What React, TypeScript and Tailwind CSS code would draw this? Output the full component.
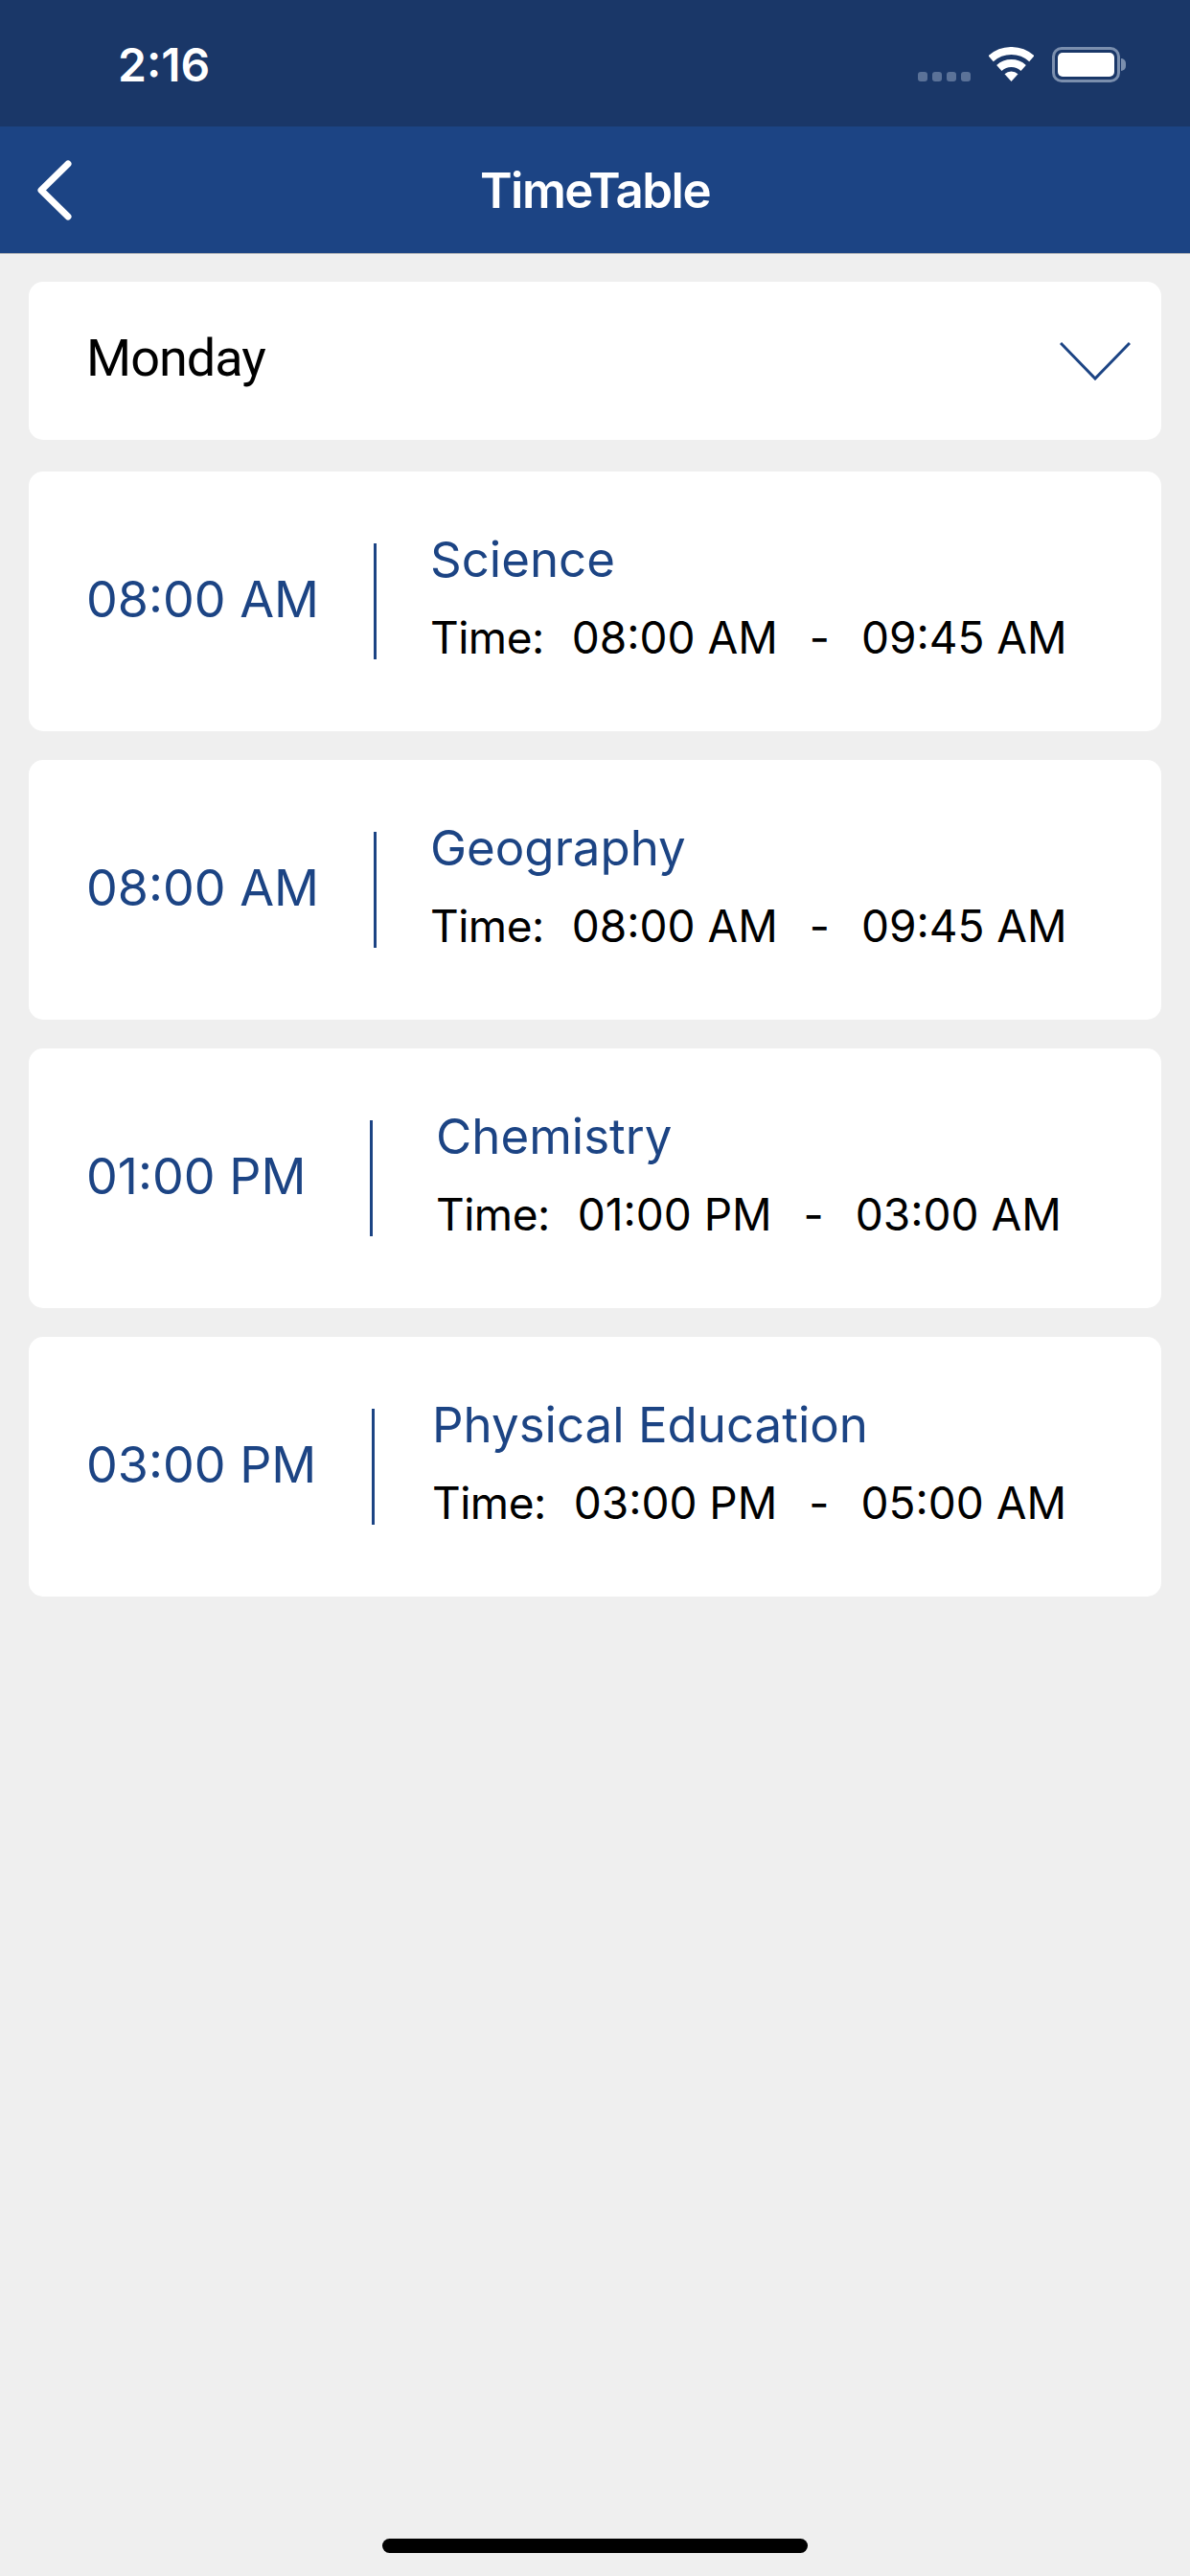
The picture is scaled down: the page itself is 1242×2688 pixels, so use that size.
import React from 'react';

interface Lesson {
  start: string;
  title: string;
  from: string;
  to: string;
  leftWidth: string;
  textGap: string;
}

const lessons: Lesson[] = [
  { start: '08:00 AM', title: 'Science', from: '08:00 AM', to: '09:45 AM', leftWidth: 'w-[300px]', textGap: 'ml-[56px]' },
  { start: '08:00 AM', title: 'Geography', from: '08:00 AM', to: '09:45 AM', leftWidth: 'w-[300px]', textGap: 'ml-[56px]' },
  { start: '01:00 PM', title: 'Chemistry', from: '01:00 PM', to: '03:00 AM', leftWidth: 'w-[296px]', textGap: 'ml-[66px]' },
  { start: '03:00 PM', title: 'Physical Education', from: '03:00 PM', to: '05:00 AM', leftWidth: 'w-[298px]', textGap: 'ml-[60px]' },
];

const StatusBar = () => (
  <div className="h-[132px] bg-[#1a3768] flex items-start justify-between text-white">
    <div className="ml-[123px] mt-[42px] text-[48px] leading-[52px] font-semibold font-['Inter',sans-serif]">2:16</div>
    <div className="flex items-start mt-[49px] mr-[73px]">
      <div className="flex gap-[5px] mt-[26px] mr-[19px]">
        <span className="w-[10px] h-[10px] rounded-[3px] bg-[#5b7298]"></span>
        <span className="w-[10px] h-[10px] rounded-[3px] bg-[#5b7298]"></span>
        <span className="w-[10px] h-[10px] rounded-[3px] bg-[#5b7298]"></span>
        <span className="w-[10px] h-[10px] rounded-[3px] bg-[#5b7298]"></span>
      </div>
      <svg width="47" height="36" viewBox="0 0 47 36" fill="none" stroke="white" strokeWidth="8">
        <path d="M2.1 12.2A32 32 0 0 1 44.9 12.2" />
        <path d="M10.8 21.9A19 19 0 0 1 36.2 21.9" />
        <path d="M23.5 36L16.5 28.2A10.5 10.5 0 0 1 30.5 28.2Z" fill="white" stroke="none" />
      </svg>
      <div className="relative ml-[19px] w-[71px] h-[37px] rounded-[10px] border-[3px] border-[#7b8fae] p-[3px]">
        <div className="w-full h-full bg-white rounded-[5px]"></div>
        <span className="absolute left-[69px] top-[9px] w-[5px] h-[13px] bg-[#7b8fae] rounded-r-[6px]"></span>
      </div>
    </div>
  </div>
);

const NavBar = () => (
  <div className="relative h-[133px] bg-[#1c4484] border-b border-[#a9adb3] flex items-center justify-center">
    <svg className="absolute left-[39px] top-[35px]" width="36" height="63" viewBox="0 0 36 63" fill="none" stroke="white" strokeWidth="7" strokeLinecap="round" strokeLinejoin="round">
      <path d="M32 4L4 31.5L32 59" />
    </svg>
    <div className="text-white text-[51px] leading-none font-semibold font-['Inter',sans-serif] tracking-[-1.5px]">TimeTable</div>
  </div>
);

const App = () => {
  return (
    <div className="min-h-[2688px] bg-[#efefef] flex flex-col font-['Inter',sans-serif]">
      <StatusBar />
      <NavBar />

      <div className="px-[30px] pt-[29px] flex flex-col gap-[30px]">
        <div className="h-[165px] mb-[3px] bg-white rounded-[15px] flex items-center justify-between pl-[60px] pr-[32px]">
          <span className="-mt-[6px] text-[54px] leading-none text-black font-['Roboto',sans-serif] tracking-[-1px]">Monday</span>
          <svg width="74" height="40" viewBox="0 0 74 40" fill="none" stroke="#1c4484" strokeWidth="3">
            <path d="M1 1L37 38L73 1" />
          </svg>
        </div>

        {lessons.map((lesson) => (
          <div key={lesson.title} className="h-[271px] bg-white rounded-[15px] flex items-center pl-[60px]">
            <div className={`${lesson.leftWidth} pb-[3px] text-[52px] leading-none text-[#1c4484]`}>{lesson.start}</div>
            <div className="w-[3px] h-[121px] bg-[#1c4484]"></div>
            <div className={`${lesson.textGap} pb-[10px] flex flex-col gap-[24px]`}>
              <div className="text-[51px] leading-[60px] text-[#1c4484]">{lesson.title}</div>
              <div className="flex text-[46px] leading-[54px] text-black whitespace-pre">
                <span className="tracking-[-0.5px]">Time:</span>
                <span className="ml-[29px]">{lesson.from}</span>
                <span className="ml-[33px]">-</span>
                <span className="ml-[33px]">{lesson.to}</span>
              </div>
            </div>
          </div>
        ))}
      </div>

      <div className="flex-1"></div>
      <div className="self-center w-[444px] h-[15px] mb-[24px] bg-black rounded-full"></div>
    </div>
  );
};

export default App;
